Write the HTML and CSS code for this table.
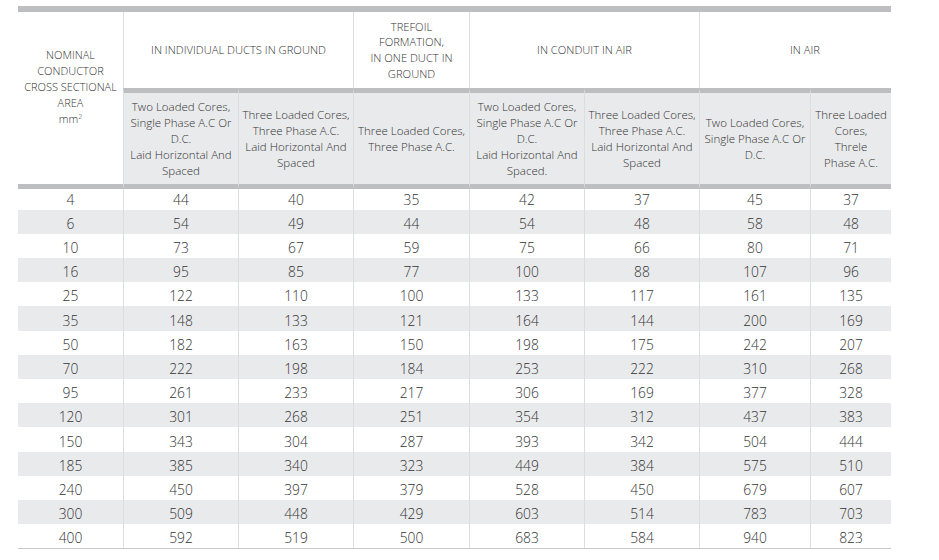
FILE: index.html
```html
<!DOCTYPE html>
<html lang="en">
<head>
<meta charset="utf-8">
<title>Current Ratings</title>
<link rel="stylesheet" href="styles.css">
</head>
<body>
<table class="ratings">
  <colgroup>
    <col class="c1"><col class="c2"><col class="c3"><col class="c4"><col class="c5"><col class="c6"><col class="c7"><col class="c8">
  </colgroup>
  <thead>
    <tr class="group-row">
      <th class="area" rowspan="2">NOMINAL<br>CONDUCTOR<br>CROSS SECTIONAL<br>AREA<br>mm<sup>2</sup></th>
      <th class="group" colspan="2">IN INDIVIDUAL DUCTS IN GROUND</th>
      <th class="group">TREFOIL<br>FORMATION,<br>IN ONE DUCT IN<br>GROUND</th>
      <th class="group" colspan="2">IN CONDUIT IN AIR</th>
      <th class="group group-air" colspan="2">IN AIR</th>
    </tr>
    <tr class="sub-row">
      <th class="sub">Two Loaded Cores,<br>Single Phase A.C Or<br>D.C.<br>Laid Horizontal And<br>Spaced</th>
      <th class="sub">Three Loaded Cores,<br>Three Phase A.C.<br>Laid Horizontal And<br>Spaced</th>
      <th class="sub">Three Loaded Cores,<br>Three Phase A.C.</th>
      <th class="sub">Two Loaded Cores,<br>Single Phase A.C Or<br>D.C.<br>Laid Horizontal And<br>Spaced.</th>
      <th class="sub">Three Loaded Cores,<br>Three Phase A.C.<br>Laid Horizontal And<br>Spaced</th>
      <th class="sub">Two Loaded Cores,<br>Single Phase A.C Or<br>D.C.</th>
      <th class="sub">Three Loaded<br>Cores,<br>Threle<br>Phase A.C.</th>
    </tr>
  </thead>
  <tbody>
    <tr class="first"><td>4</td><td>44</td><td>40</td><td>35</td><td>42</td><td>37</td><td>45</td><td>37</td></tr>
    <tr><td>6</td><td>54</td><td>49</td><td>44</td><td>54</td><td>48</td><td>58</td><td>48</td></tr>
    <tr><td>10</td><td>73</td><td>67</td><td>59</td><td>75</td><td>66</td><td>80</td><td>71</td></tr>
    <tr><td>16</td><td>95</td><td>85</td><td>77</td><td>100</td><td>88</td><td>107</td><td>96</td></tr>
    <tr><td>25</td><td>122</td><td>110</td><td>100</td><td>133</td><td>117</td><td>161</td><td>135</td></tr>
    <tr class="tall"><td>35</td><td>148</td><td>133</td><td>121</td><td>164</td><td>144</td><td>200</td><td>169</td></tr>
    <tr><td>50</td><td>182</td><td>163</td><td>150</td><td>198</td><td>175</td><td>242</td><td>207</td></tr>
    <tr><td>70</td><td>222</td><td>198</td><td>184</td><td>253</td><td>222</td><td>310</td><td>268</td></tr>
    <tr><td>95</td><td>261</td><td>233</td><td>217</td><td>306</td><td>169</td><td>377</td><td>328</td></tr>
    <tr><td>120</td><td>301</td><td>268</td><td>251</td><td>354</td><td>312</td><td>437</td><td>383</td></tr>
    <tr class="tall"><td>150</td><td>343</td><td>304</td><td>287</td><td>393</td><td>342</td><td>504</td><td>444</td></tr>
    <tr><td>185</td><td>385</td><td>340</td><td>323</td><td>449</td><td>384</td><td>575</td><td>510</td></tr>
    <tr><td>240</td><td>450</td><td>397</td><td>379</td><td>528</td><td>450</td><td>679</td><td>607</td></tr>
    <tr><td>300</td><td>509</td><td>448</td><td>429</td><td>603</td><td>514</td><td>783</td><td>703</td></tr>
    <tr><td>400</td><td>592</td><td>519</td><td>500</td><td>683</td><td>584</td><td>940</td><td>823</td></tr>
  </tbody>
</table>
</body>
</html>
```
FILE: styles.css
```css
html, body {
  margin: 0;
  padding: 0;
  background: #ffffff;
}

body {
  padding: 6px 0 0 18px;
  font-family: "Open Sans", "Noto Sans", sans-serif;
  font-weight: 360;
  color: #333333;
}

.ratings {
  width: 873px;
  table-layout: fixed;
  border-collapse: separate;
  border-spacing: 0;
  border-top: 6px solid #bdbec0;
  border-bottom: 1px solid #c6c7c9;
}

.c1 { width: 105px; }
.c2 { width: 115px; }
.c3 { width: 115px; }
.c4 { width: 116px; }
.c5 { width: 115px; }
.c6 { width: 115px; }
.c7 { width: 111px; }
.c8 { width: 81px; }

.ratings th,
.ratings td {
  padding: 0;
  text-align: center;
  vertical-align: middle;
  font-weight: 360;
  white-space: nowrap;
}

.group-row {
  height: 76px;
}

.area {
  font-size: 11px;
  line-height: 16px;
  padding-bottom: 22px !important;
  border-bottom: 5px solid #bdbec0;
}

.area sup {
  font-size: 7px;
  line-height: 0;
  vertical-align: 4px;
}

.group {
  font-size: 11.2px;
  line-height: 15.7px;
  border-left: 1px solid #dcdddf;
}

.group-air {
  padding-left: 19px !important;
}

.sub-row {
  height: 101px;
}

.sub {
  font-size: 11.5px;
  line-height: 16px;
  background: #e9eaec;
  border-left: 1px solid #dcdddf;
  border-top: 5px solid #bdbec0;
  border-bottom: 5px solid #bdbec0;
}

.ratings tbody tr {
  height: 24px;
}

.ratings tbody tr.tall {
  height: 25px;
}

.ratings tbody tr.first {
  height: 21px;
}

.ratings tbody td {
  font-size: 13.8px;
  line-height: 18px;
  padding-top: 4px;
}

.ratings tbody tr.first td {
  line-height: 20px;
  padding-top: 0;
}

.ratings tbody td + td {
  border-left: 1px solid #dcdddf;
}

.ratings tbody tr:nth-child(even) td {
  background: #e9eaec;
}
```
